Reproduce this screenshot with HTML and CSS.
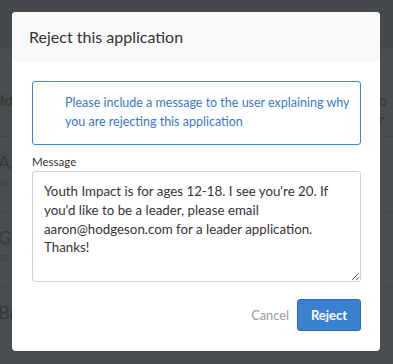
FILE: index.html
```html
<!DOCTYPE html>
<html lang="en">
<head>
    <meta charset="UTF-8">
    <title>Reject this application</title>
    <link rel="stylesheet" href="styles.css">
</head>
<body>
    <div id="page">
        <div class="topbar"></div>
        <div class="row row-first">
            <span class="green left">ld</span>
            <span class="green right">o r</span>
        </div>
        <div class="row">
            <span class="name">Aa</span>
            <span class="sub">&#9993; a</span>
        </div>
        <div class="row">
            <span class="name">Ge</span>
            <span class="sub">&#9993; l</span>
        </div>
        <div class="row">
            <span class="name">Bra</span>
        </div>
    </div>

    <div class="modal">
        <div class="modal-head">Reject this application</div>
        <div class="modal-body">
            <div class="notice">Please include a message to the user explaining why you are rejecting this application</div>
            <label class="label" for="msg">Message</label>
            <textarea id="msg" class="message">Youth Impact is for ages 12-18. I see you're 20. If you'd like to be a leader, please email aaron@hodgeson.com for a leader application. Thanks!</textarea>
        </div>
        <div class="modal-foot">
            <a class="cancel" href="#">Cancel</a>
            <button class="reject">Reject</button>
        </div>
    </div>
</body>
</html>
```

FILE: styles.css
```css
*{margin:0;padding:0;box-sizing:border-box;}
html,body{width:100%;height:100%;}
body{background:#4a4d50;font-family:Lato,"Open Sans",sans-serif;color:#333;overflow:hidden;}

#page{width:100%;height:100%;}
.topbar{height:47px;background:#46494c;border-bottom:1px solid #414447;}
.row{height:75px;border-bottom:1px solid #424548;position:relative;padding:14px 0 0 0;}
.row-first{height:90px;}
.green{font-weight:bold;font-size:16px;color:#2f4032;position:absolute;top:43px;}
.green.left{left:0;}
.green.right{left:378px;}
.name{display:block;font-size:18px;color:#35383b;margin-left:-2px;}
.sub{display:block;font-size:11px;color:#3d4043;margin-top:3px;}

.modal{
    position:absolute;
    left:12px;
    top:12px;
    width:368px;
    height:339px;
    background:#fff;
    border-radius:4px;
    overflow:hidden;
    display:flex;
    flex-direction:column;
}
.modal-head{
    height:50px;
    background:#f8f8f8;
    padding:0 17px;
    font-size:16px;
    line-height:50px;
    color:#333;
}
.modal-body{padding:19px 19px 0 20px;display:flex;flex-direction:column;}
.notice{
    border:1px solid #3a86d0;
    border-radius:3px;
    padding:11px 4px 0 32px;
    height:64px;
    font-size:12.5px;
    line-height:19px;
    color:#3a78c8;
}
.label{font-size:11.5px;line-height:16px;margin-top:9px;color:#333;}
.message{
    margin-top:1px;
    height:111px;
    border:1px solid #d3d3d3;
    border-radius:3px;
    padding:10px 11px;
    font-family:Lato,"Open Sans",sans-serif;
    font-size:13.3px;
    line-height:18.8px;
    color:#333;
    overflow:hidden;
}
.modal-foot{display:flex;justify-content:flex-end;align-items:center;gap:8px;padding:17px 19px 0 0;}
.cancel{font-size:12.8px;color:#999;text-decoration:none;}
.reject{
    width:64px;
    height:32px;
    background:#3a82cf;
    border:1px solid #2b6cb0;
    border-radius:3px;
    color:#fff;
    font-family:Lato,"Open Sans",sans-serif;
    font-weight:bold;
    font-size:13px;
}
```
